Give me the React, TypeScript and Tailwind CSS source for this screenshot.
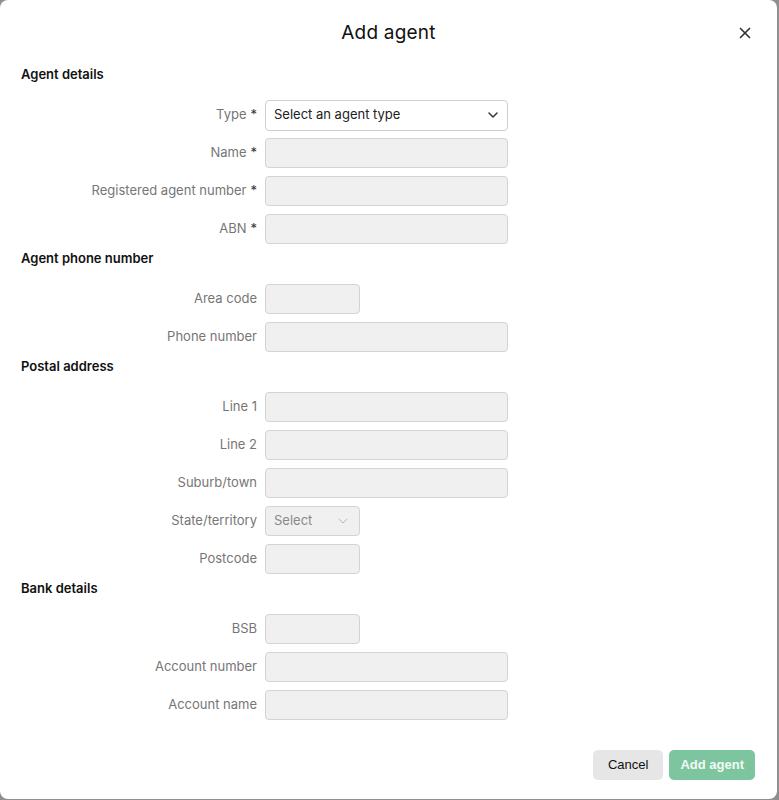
import { ChevronDown, X } from 'lucide-react'

type Field = {
  label: string
  required?: boolean
  size?: 'full' | 'short'
  kind?: 'input' | 'select' | 'typeSelect'
}

type Section = { title: string; fields: Field[] }

const SECTIONS: Section[] = [
  {
    title: 'Agent details',
    fields: [
      { label: 'Type', required: true, kind: 'typeSelect' },
      { label: 'Name', required: true },
      { label: 'Registered agent number', required: true },
      { label: 'ABN', required: true },
    ],
  },
  {
    title: 'Agent phone number',
    fields: [
      { label: 'Area code', size: 'short' },
      { label: 'Phone number' },
    ],
  },
  {
    title: 'Postal address',
    fields: [
      { label: 'Line 1' },
      { label: 'Line 2' },
      { label: 'Suburb/town' },
      { label: 'State/territory', size: 'short', kind: 'select' },
      { label: 'Postcode', size: 'short' },
    ],
  },
  {
    title: 'Bank details',
    fields: [
      { label: 'BSB', size: 'short' },
      { label: 'Account number' },
      { label: 'Account name' },
    ],
  },
]

function FieldRow({ field }: { field: Field }) {
  const width = field.size === 'short' ? 'w-[95px]' : 'w-[243px]'
  return (
    <div className="flex items-center h-[30px] mt-2 first:mt-0">
      <div className="w-[265px] pr-[8px] text-right text-[13px] text-[#767676]">
        {field.label}
        {field.required && <span className="text-[#333] ml-1">*</span>}
      </div>
      {field.kind === 'typeSelect' ? (
        <div className={`${width} h-[31px] flex items-center justify-between px-2 bg-white border border-[#cfcfcf] rounded-[4px] text-[13px] text-[#222]`}>
          <span>Select an agent type</span>
          <ChevronDown size={16} strokeWidth={2.2} className="text-[#333] -mr-0.5" />
        </div>
      ) : field.kind === 'select' ? (
        <div className={`${width} h-[30px] flex items-center justify-between px-2 bg-[#f0f0f0] border border-[#d3d3d3] rounded-[4px] text-[13px] text-[#8a8a8a]`}>
          <span>Select</span>
          <ChevronDown size={16} strokeWidth={1.5} className="text-[#b8b8b8]" />
        </div>
      ) : (
        <div className={`${width} h-[30px] bg-[#f0f0f0] border border-[#d3d3d3] rounded-[4px]`} />
      )}
    </div>
  )
}

export default function App() {
  return (
    <div className="w-full h-[800px] bg-[#8f8f8f]" style={{ fontFamily: 'Inter, "Noto Sans", sans-serif' }}>
      <div className="relative w-[777px] h-[799px] bg-white rounded-[8px] flex flex-col">
        {/* header */}
        <div className="relative h-[64px] flex items-center justify-center">
          <h1 className="text-[19px] text-[#111] tracking-[0.2px] mt-[2px]">Add agent</h1>
          <button className="absolute right-[23px] top-[24px] text-[#333]">
            <X size={18} strokeWidth={2.2} />
          </button>
        </div>

        {/* form */}
        <div className="px-[21px] flex-1">
          {SECTIONS.map((section, i) => (
            <div key={section.title} className={i === 0 ? '' : 'mt-[4px]'}>
              <h2 className="text-[13px] font-semibold text-[#111] h-[20px] leading-[20px]">{section.title}</h2>
              <div className="mt-[16px] -ml-[21px]">
                {section.fields.map((f) => (
                  <FieldRow key={f.label} field={f} />
                ))}
              </div>
            </div>
          ))}
        </div>

        {/* footer */}
        <div className="flex justify-end gap-[6px] pr-[22px] pb-[19px]" style={{ fontFamily: '"Liberation Sans", Arial, sans-serif' }}>
          <button className="h-[30px] px-[15px] rounded-[5px] bg-[#e6e6e6] text-[13px] text-[#111]">Cancel</button>
          <button className="h-[30px] px-[11px] rounded-[5px] bg-[#7dc59e] text-[13px] font-bold text-white/90">Add agent</button>
        </div>
      </div>
    </div>
  )
}
